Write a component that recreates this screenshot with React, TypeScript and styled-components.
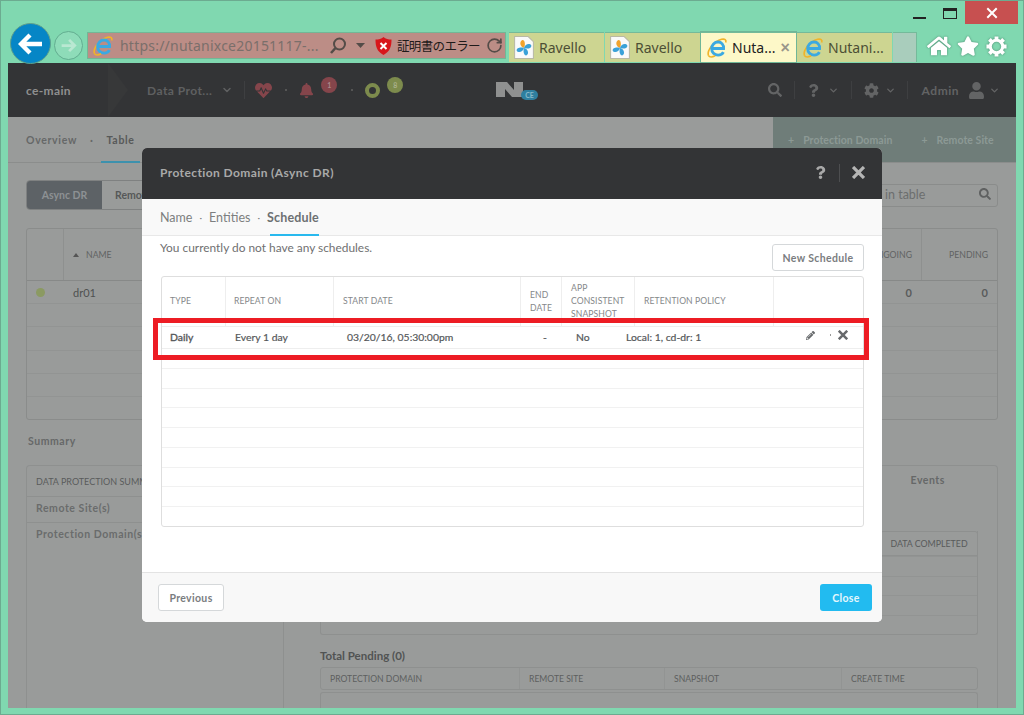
import React from "react";
import styled, { createGlobalStyle } from "styled-components";
import { ChevronDown, RotateCw } from "lucide-react";
import { FaBell, FaCog, FaHeartbeat, FaHome, FaPencilAlt, FaQuestion, FaSearch, FaStar, FaUser } from "react-icons/fa";

const Global = createGlobalStyle`
  html, body { margin: 0; padding: 0; background: #80d8b0; }
  * { box-sizing: border-box; }
  body { font-family: Lato, "Open Sans", sans-serif; }
`;

const Win = styled.div`
  position: relative; width: 1024px; height: 715px; overflow: hidden;
  background: #80d8b0; border: 1px solid #6cab90;
  display: flex; flex-direction: column;
`;
const Chrome = styled.div`height: 62px; flex: none; display: flex; flex-direction: column;`;
const Caption = styled.div`height: 31px; display: flex; justify-content: flex-end; align-items: flex-start; padding-right: 5px;`;
const Minimize = styled.div`width: 13px; height: 2px; background: #222; margin: 16px 17px 0 0;`;
const Maximize = styled.div`width: 14px; height: 11px; border: 1px solid #222; border-top-width: 3px; margin: 7px 8px 0 0;`;
const CloseWin = styled.div`
  width: 53px; height: 23px; background: #c75050; color: #fff; font: 700 15px "Liberation Sans", sans-serif;
  display: flex; align-items: center; justify-content: center;
`;
const ToolRow = styled.div`height: 31px; display: flex; align-items: flex-end; position: relative;`;
const Back = styled.div`
  width: 41px; height: 41px; border-radius: 50%; background: #0686c6; border: 1px solid #5fa08c;
  margin-left: 9px; margin-bottom: -1px; flex: none; display: flex; align-items: center; justify-content: center; z-index: 2;
`;
const Forward = styled.div`
  width: 29px; height: 29px; border-radius: 50%; border: 1px solid #62ad90; background: #8edcb9;
  margin: 0 4px 3px 3px; flex: none; display: flex; align-items: center; justify-content: center;
`;
const Address = styled.div`
  width: 419px; height: 27px; margin-bottom: 4px; flex: none; background: #bc8d86; border: 1px solid #72b796;
  display: flex; align-items: center; padding-left: 4px; font-family: "Noto Sans", sans-serif;
`;
const Url = styled.span`font-size: 14px; color: #7a6f6b; margin-left: 6px; width: 205px; white-space: nowrap; letter-spacing: .22px;`;
const AddrIcon = styled.span`display: flex; align-items: center; margin-left: ${p => p.$ml ?? 0}px; color: ${p => p.$c ?? "#544"};`;
const CertText = styled.span`font: 12.5px "Noto Sans CJK JP", sans-serif; color: #1e1a1a; margin-left: 5px; white-space: nowrap; letter-spacing: -.65px;`;
const Tabs = styled.div`display: flex; margin-left: 3px; margin-bottom: 1px; gap: 1px; align-items: stretch; height: 30px;`;
const Tab = styled.div`
  width: 95px; padding-left: 5px; display: flex; align-items: center; gap: ${p => p.$gap ?? 4}px;
  background: ${p => p.$active ? "#fdf8c8" : "#cdd591"}; color: ${p => p.$active ? "#222" : "#4c4f35"};
  border-top: 1px solid #74ba9a; font: 14px "Noto Sans", sans-serif; white-space: nowrap;
  box-shadow: ${p => p.$active ? "0 0 0 1px #6fb697" : "none"};
`;
const TabClose = styled.span`color: #99968a; font: 700 16px "Liberation Sans", sans-serif; margin-left: 1px;`;
const NewTab = styled.div`width: 24px; background: #a9cdbc; border-top: 1px solid #74ba9a; border-right: 1px solid #74ba9a;`;
const Tools = styled.div`display: flex; gap: 6px; align-items: center; margin: 0 0 3px 10px; color: #fff; height: 28px; filter: drop-shadow(0 0 1px #4c8a70);`;

const Page = styled.div`
  flex: 1; margin: 0 7px 6px; background: #999b9a; overflow: hidden; display: flex; flex-direction: column;
  color: #5a5c5c;
`;
const AppHeader = styled.div`height: 54px; flex: none; background: #333436; display: flex; align-items: center; color: #6e6f70;`;
const HeadSide = styled.div`flex: 1; display: flex; align-items: center; justify-content: ${p => p.$end ? "flex-end" : "flex-start"}; height: 100%;`;
const Cluster = styled.div`
  height: 100%; width: 120px; flex: none; position: relative; display: flex; align-items: center; padding-left: 18px;
  font-size: 12px; font-weight: 700; color: #8f8f8f; letter-spacing: .35px;
`;
const ClusterArrow = styled.svg`position: absolute; right: 0; top: 0;`;
const Crumb = styled.span`font-size: 12px; font-weight: 700; color: #5f6061; margin-left: 19px; letter-spacing: .45px; white-space: nowrap;`;
const HeadIcon = styled.span`
  position: relative; display: flex; align-items: center; margin-left: ${p => p.$ml ?? 0}px; color: ${p => p.$c ?? "#636465"};
`;
const HeadDivider = styled.span`width: 1px; height: 18px; background: #3e3f41; margin-left: ${p => p.$ml ?? 0}px;`;
const HeadDot = styled.span`width: 2px; height: 2px; background: #555; margin-left: ${p => p.$ml ?? 0}px;`;
const Badge = styled.span`
  position: absolute; left: ${p => p.$l}px; top: -6px; width: 16px; height: 16px; border-radius: 50%; background: ${p => p.$bg};
  color: ${p => p.$fg}; font-size: 7px; font-weight: 700; display: flex; align-items: center; justify-content: center;
`;
const Ring = styled.span`width: 15px; height: 15px; border-radius: 50%; border: 4px solid #7d8b4d; display: block;`;
const AdminName = styled.span`font-size: 12px; font-weight: 700; color: #626364; margin-left: 14px; letter-spacing: .5px;`;
const Logo = styled.div`width: 52px; height: 26px; flex: none;`;
const LogoBadgeText = styled.text`font: 700 7px Lato, sans-serif; fill: #86b9ca;`;

const SubBar = styled.div`height: 46px; flex: none; display: flex; justify-content: space-between; border-bottom: 1px solid #8b8d8c;`;
const SubNav = styled.div`display: flex; align-items: center; padding-left: 18px; font-size: 10.5px; font-weight: 700; letter-spacing: .68px; color: #666868;`;
const SubDot = styled.span`margin: 0 13px;`;
const SubActive = styled.span`color: #575959; height: 100%; display: flex; align-items: center; position: relative; padding: 0 5px; margin-left: -5px;
  &::after { content: ""; position: absolute; left: -1px; right: 0; bottom: -1px; height: 2px; background: #3d91ad; }`;
const AddZone = styled.div`
  width: 243px; background: #6f7d79; color: #8c9995; font-size: 10.5px; font-weight: 700; letter-spacing: .05px;
  display: flex; align-items: center; padding-left: 15px; gap: 29px; white-space: nowrap;
`;
const AddItem = styled.span`display: flex; gap: 9px; align-items: center;`;
const Content = styled.div`flex: 1; padding: 17px 18px 0; display: flex; flex-direction: column; min-height: 0;`;
const Controls = styled.div`height: 30px; flex: none; display: flex; justify-content: space-between; align-items: center;`;
const Seg = styled.div`display: flex; height: 30px; border: 1px solid #7f8181; border-radius: 4px; overflow: hidden; width: 160px;`;
const SegOn = styled.div`width: 75px; background: #5d6266; color: #8d9194; font-size: 10.5px; font-weight: 700; display: flex; align-items: center; justify-content: center;`;
const SegOff = styled.div`flex: 1; font-size: 10.5px; font-weight: 700; display: flex; align-items: center; padding-left: 13px; color: #565858;`;
const SearchBox = styled.div`
  width: 200px; height: 23px; border: 1px solid #8a8c8b; border-radius: 3px; display: flex; align-items: center;
  justify-content: space-between; padding: 0 6px 2px 86px; font-size: 12.5px; color: #6c6e6e; margin-right: 0;
`;
const DimTable = styled.div`height: 192px; margin-top: 18px; flex: none; border: 1px solid #8a8c8b; border-radius: 3px; display: flex; flex-direction: column;`;
const DimHead = styled.div`
  height: 52px; flex: none; display: grid; grid-template-columns: 36px 1fr 76px; border-bottom: 1px solid #878988;
  font-size: 8.7px; align-items: stretch; color: #616363;
`;
const DimHeadCell = styled.div`
  display: flex; align-items: center; padding: 0 9px; gap: 7px; justify-content: ${p => p.$end ? "flex-end" : "flex-start"};
  border-left: ${p => p.$line ? "1px solid #8e908f" : "none"};
`;
const HeadOngoing = styled.span`margin-left: auto;`;
const DimRow = styled.div`
  flex: 1; display: grid; grid-template-columns: 36px 1fr 76px; align-items: center; font-size: 11px; font-weight: 700;
  border-bottom: ${p => p.$last ? "none" : "1px solid #929493"};
`;
const StatusDot = styled.span`width: 9px; height: 9px; border-radius: 50%; background: #8b9a62; margin-left: 9px;`;
const RowName = styled.span`font-weight: 400; color: #4f5151; padding-left: 10px;`;
const RowSplit = styled.div`display: flex; justify-content: space-between;`;
const RowNum = styled.span`padding-right: 9px; text-align: right;`;
const SummaryTitle = styled.div`font-size: 10.5px; font-weight: 700; letter-spacing: .55px; margin: 14px 0 17px 2px; line-height: 14px; color: #666868;`;
const SummaryPanel = styled.div`flex: 1; min-height: 0; border: 1px solid #8e908f; border-bottom: none; border-radius: 4px 4px 0 0; display: flex;`;
const SummaryLeft = styled.div`width: 257px; flex: none; border-right: 1px solid #8e908f;`;
const SummaryHead = styled.div`height: 31px; padding: 10px 9px 0; font-size: 9px; border-bottom: 1px solid #8e908f; white-space: nowrap; color: #5a5c5c;`;
const SummaryLine = styled.div`height: ${p => p.$h}px; padding: 5px 9px 0; font-size: 10.5px; font-weight: 700; letter-spacing: .55px; border-bottom: ${p => p.$line ? "1px solid #8e908f" : "none"}; white-space: nowrap; color: #6a6c6c;`;
const SummaryRight = styled.div`flex: 1; min-width: 0; padding: 0 19px 0 36px; display: flex; flex-direction: column;`;
const EventsTab = styled.div`height: 31px; padding-top: 8px; text-align: right; font-size: 10.5px; font-weight: 700; padding-right: 33px; letter-spacing: .55px; color: #666868;`;
const DimBox = styled.div`height: 104px; margin-top: 34px; flex: none; border: 1px solid #8e908f; border-top: none; border-radius: 0 0 3px 3px; display: flex; flex-direction: column;`;
const CompletedCell = styled.div`height: 25px; flex: none; margin-left: auto; width: 98px; border: 1px solid #8e908f; border-radius: 3px 3px 0 0; font-size: 8.8px; display: flex; align-items: center; justify-content: center; margin-right: -1px; white-space: nowrap; color: #585a5a;`;
const BoxRow = styled.div`flex: 1; border-top: 1px solid #929493;`;
const PendingTitle = styled.div`font-size: 11.5px; font-weight: 700; margin-top: 14px; line-height: 14px; color: #515353;`;
const PendingHead = styled.div`
  height: 23px; margin-top: 4px; flex: none; border: 1px solid #8e908f; border-radius: 3px; display: grid;
  grid-template-columns: 198px 145px 177px 1fr; font-size: 8.6px; color: #5d5f5f;
`;
const PendingCell = styled.div`display: flex; align-items: center; padding-left: 9px; border-left: ${p => p.$line ? "1px solid #929493" : "none"};`;
const PendingBody = styled.div`flex: 1; margin-top: 2px; border: 1px solid #8e908f; border-bottom: none; border-radius: 3px 3px 0 0;`;

const Modal = styled.div`
  position: absolute; left: 141px; top: 147px; width: 740px; height: 474px; border-radius: 5px; overflow: hidden;
  display: flex; flex-direction: column; background: #fff; color: #666;
`;
const ModalHead = styled.div`height: 51px; flex: none; background: #333436; display: flex; align-items: center; padding: 0 17px 2px 18px; color: #a9a9a9;`;
const ModalTitle = styled.div`font-size: 12px; font-weight: 700; flex: 1; letter-spacing: .4px;`;
const HeadSep = styled.span`width: 1px; height: 18px; background: #4d4e50; margin: 0 12px;`;
const ModalTabs = styled.div`height: 37px; flex: none; background: #f9f9f9; border-bottom: 1px solid #e8e8e8; display: flex; align-items: center; padding-left: 18px; font-size: 12.5px; color: #7d7f80;`;
const TabDot = styled.span`margin: 0 7px; font-size: 10px;`;
const TabOn = styled.span`font-weight: 700; color: #6d7072; height: 100%; display: flex; align-items: center; position: relative; letter-spacing: .15px;
  &::after { content: ""; position: absolute; left: 3px; right: 0; bottom: -1px; height: 2px; background: #29b9ee; }`;
const ModalBody = styled.div`flex: 1; padding: 0 18px 0 19px; min-height: 0;`;
const IntroRow = styled.div`height: 40px; display: flex; justify-content: space-between;`;
const IntroText = styled.div`font-size: 11.9px; color: #6f7071; margin: 5px 0 0 -1px; line-height: 14px;`;
const GhostBtn = styled.div`
  height: 27px; width: ${p => p.$w}px; margin-top: ${p => p.$mt ?? 0}px; border: 1px solid #d5d8da; border-radius: 3px; background: #fff;
  color: #7a7d7f; font-size: 10.5px; font-weight: 700; letter-spacing: .35px; display: flex; align-items: center; justify-content: center;
`;
const SchedTable = styled.div`height: 251px; border: 1px solid #dedede; border-radius: 3px; display: flex; flex-direction: column;`;
const SchedHead = styled.div`height: 49px; flex: none; display: grid; grid-template-columns: 63px 108px 187px 41px 73px 139px 1fr; color: #85888a; font-size: 8.6px; letter-spacing: .1px;`;
const SchedHeadCell = styled.div`display: flex; align-items: center; padding-left: ${p => p.$pad ?? 9}px; line-height: 12.7px; border-left: ${p => p.$line ? "1px solid #eee" : "none"};`;
const SchedDataRow = styled.div`
  height: 23px; flex: none; display: grid; grid-template-columns: 65px 112px 196px 33px 50px 179px 1fr; align-items: center;
  border-top: 1px solid #eee; border-bottom: 1px solid #eee; font-size: 10.4px; color: #55585a; padding: 0 0 2px 8px;
`;
const SchedCell = styled.span`white-space: nowrap; font-weight: 400; -webkit-text-stroke: ${p => p.$strong ? ".35px" : ".2px"};`;
const RowActions = styled.span`display: flex; align-items: center; color: #66696b; padding-bottom: 3px; padding-left: 1px;`;
const ActionDot = styled.span`width: 1px; height: 2px; background: #999; margin: 0 7px 0 15px;`;
const EmptyRow = styled.div`flex: 1; border-bottom: ${p => p.$last ? "none" : "1px solid #f1f1f1"};`;
const ModalFoot = styled.div`height: 50px; flex: none; background: #f8f8f8; border-top: 1px solid #e3e3e3; display: flex; align-items: center; justify-content: space-between; padding: 0 10px 0 16px;`;
const PrimaryBtn = styled.div`width: 52px; height: 27px; border-radius: 3px; background: #22bbf0; color: #e4f7fd; font-size: 10.5px; font-weight: 700; letter-spacing: .3px; display: flex; align-items: center; justify-content: center;`;
const Callout = styled.div`position: absolute; left: 11px; top: 170px; width: 716px; height: 42px; border: 5px solid #ed1c24; pointer-events: none;`;
const TabLabel = styled.span`margin-left: 1px;`;
const HeadEnd = styled.span`width: 16px; flex: none;`;

const Cross = ({ s, c, w = 3 }: { s: number; c: string; w?: number }) => (
  <svg width={s} height={s} viewBox="0 0 12 12"><path d="M2 2l8 8M10 2l-8 8" stroke={c} strokeWidth={w} strokeLinecap="square" fill="none" /></svg>
);
const IeIcon = ({ s = 22 }: { s?: number }) => (
  <svg width={s} height={s} viewBox="0 0 24 24" fill="none">
    <path d="M2.500 20C1 14 9 4.500 17 2.500c3.500-.8 5.500 .5 4.500 3.500" stroke="#f0b429" strokeWidth="1.800" />
    <path d="M7 12.500h12.200c.3-4-2.400-7-6-7-4 0-7 3.200-7 7.200s3 7.100 7 7.100c2.600 0 4.700-1.200 5.800-3.300" stroke="#3ba9e2" strokeWidth="3.100" />
    <path d="M2.500 20c1.500 2.500 5 1.800 7.500 .5" stroke="#f0b429" strokeWidth="1.800" />
  </svg>
);
const RavelloIcon = () => (
  <svg width="20" height="23" viewBox="0 0 19 22">
    <path d="M.5.5h13l5 5v16H.5z" fill="#fafafa" stroke="#b9b9a5" />
    <path d="M9.500 11.500C5.500 10 5 5.500 7.500 4c3-.8 3.500 4.500 2 7.500z" fill="#f2a32c" />
    <path d="M9.500 11.500c1-4 5.500-5 7-2.500 .5 2.800-4 3.500-7 2.500z" fill="#3aa1d8" />
    <path d="M9.500 11.500c4 1 5 5.500 2.500 7-2.800 .5-3.500-4-2.500-7z" fill="#3aa1d8" />
    <path d="M9.500 11.500c-1 4-5.500 5-7 2.500-.5-2.800 4-3.500 7-2.500z" fill="#3aa1d8" />
  </svg>
);
const GearOutline = () => (
  <svg width="23" height="23" viewBox="0 0 24 24" fill="none" stroke="#fff">
    <circle cx="12" cy="12" r="6.500" strokeWidth="3.200" />
    <path d="M12 1.500v4M12 18.500v4M1.500 12h4M18.500 12h4M4.600 4.600l2.800 2.800M16.600 16.600l2.800 2.800M4.600 19.400l2.800-2.800M16.600 7.400l2.800-2.800" strokeWidth="4" />
  </svg>
);

const emptyRows = [0, 1, 2, 3, 4, 5, 6, 7, 8];

export default function App() {
  return (
    <Win>
      <Global />
      <Chrome>
        <Caption>
          <Minimize />
          <Maximize />
          <CloseWin><Cross s={12} c="#fff" w={2} /></CloseWin>
        </Caption>
        <ToolRow>
          <Back>
            <svg width="26" height="24" viewBox="0 0 26 24"><path d="M12 3L3 12l9 9M4 12h20" stroke="#fff" strokeWidth="4.400" fill="none" /></svg>
          </Back>
          <Forward>
            <svg width="17" height="15" viewBox="0 0 26 24"><path d="M14 3l9 9-9 9M22 12H2" stroke="#b9e8d2" strokeWidth="4.400" fill="none" /></svg>
          </Forward>
          <Address>
            <IeIcon />
            <Url>https://nutanixce20151117-...</Url>
            <AddrIcon $ml={3}>
              <svg width="20" height="20" viewBox="0 0 20 20"><circle cx="11.500" cy="8" r="5.500" stroke="#544c48" strokeWidth="2" fill="none" /><path d="M7.500 12L3 17" stroke="#544c48" strokeWidth="2.600" /></svg>
            </AddrIcon>
            <AddrIcon $ml={8}>
              <svg width="9" height="5" viewBox="0 0 9 5"><path d="M0 0h9L4.500 5z" fill="#544c48" /></svg>
            </AddrIcon>
            <AddrIcon $ml={10}>
              <svg width="17" height="18" viewBox="0 0 17 18"><path d="M8.500 0c2 2 5 2.500 8 2.500 0 7-1.500 12-8 15.500C2 14.500.5 9.500.5 2.500c3 0 6-.5 8-2.500z" fill="#d8161b" /><path d="M5.500 6l6 6M11.500 6l-6 6" stroke="#fff" strokeWidth="2" /></svg>
            </AddrIcon>
            <CertText>証明書のエラー</CertText>
            <AddrIcon $ml={6}><RotateCw size={17} strokeWidth={2.4} color="#544c48" /></AddrIcon>
          </Address>
          <Tabs>
            <Tab><RavelloIcon /><TabLabel>Ravello</TabLabel></Tab>
            <Tab><RavelloIcon /><TabLabel>Ravello</TabLabel></Tab>
            <Tab $active>
              <IeIcon />Nuta...<TabClose>×</TabClose>
            </Tab>
            <Tab><IeIcon />Nutani...</Tab>
            <NewTab />
          </Tabs>
          <Tools>
            <FaHome size={24} />
            <FaStar size={22} />
            <GearOutline />
          </Tools>
        </ToolRow>
      </Chrome>
      <Page>
        <AppHeader>
          <HeadSide>
            <Cluster>
              ce-main
              <ClusterArrow width="20" height="54" viewBox="0 0 20 54"><path d="M0 0l20 27L0 54z" fill="#373839" /></ClusterArrow>
            </Cluster>
            <Crumb>Data Prot...</Crumb>
            <HeadIcon $ml={9} $c="#5f6061"><ChevronDown size={12} strokeWidth={3} /></HeadIcon>
            <HeadDivider $ml={11} />
            <HeadIcon $ml={10} $c="#85454b"><FaHeartbeat size={17} /></HeadIcon>
            <HeadDot $ml={13} />
            <HeadIcon $ml={12} $c="#85454b">
              <FaBell size={15} />
              <Badge $l={22} $bg="#85454b" $fg="#a98a8c">1</Badge>
            </HeadIcon>
            <HeadDot $ml={37} />
            <HeadIcon $ml={12}>
              <Ring />
              <Badge $l={22} $bg="#7d8b4d" $fg="#a9b08c">8</Badge>
            </HeadIcon>
          </HeadSide>
          <Logo>
            <svg width="52" height="26" viewBox="0 0 52 26">
              <path d="M10 5h11l7 8V5h9v15H26l-7-8v8h-9z" fill="#8f9090" />
              <rect x="35" y="13" width="17" height="10" rx="5" fill="#2f7f9f" />
              <LogoBadgeText x="43.500" y="20.500" textAnchor="middle">CE</LogoBadgeText>
            </svg>
          </Logo>
          <HeadSide $end>
            <HeadIcon><FaSearch size={14} /></HeadIcon>
            <HeadDivider $ml={12} />
            <HeadIcon $ml={12}><FaQuestion size={13} /></HeadIcon>
            <HeadIcon $ml={8}><ChevronDown size={11} strokeWidth={3} /></HeadIcon>
            <HeadDivider $ml={12} />
            <HeadIcon $ml={12}><FaCog size={15} /></HeadIcon>
            <HeadIcon $ml={6}><ChevronDown size={11} strokeWidth={3} /></HeadIcon>
            <HeadDivider $ml={11} />
            <AdminName>Admin</AdminName>
            <HeadIcon $ml={9}><FaUser size={17} /></HeadIcon>
            <HeadIcon $ml={4}><ChevronDown size={11} strokeWidth={3} /></HeadIcon>
            <HeadEnd />
          </HeadSide>
        </AppHeader>
        <SubBar>
          <SubNav>
            Overview<SubDot>·</SubDot><SubActive>Table</SubActive>
          </SubNav>
          <AddZone>
            <AddItem><span>+</span><span>Protection Domain</span></AddItem>
            <AddItem><span>+</span><span>Remote Site</span></AddItem>
          </AddZone>
        </SubBar>
        <Content>
          <Controls>
            <Seg><SegOn>Async DR</SegOn><SegOff>Remote Site</SegOff></Seg>
            <SearchBox>in table<FaSearch size={12} color="#5f6161" /></SearchBox>
          </Controls>
          <DimTable>
            <DimHead>
              <DimHeadCell />
              <DimHeadCell $line>
                <svg width="6" height="4" viewBox="0 0 6 4"><path d="M3 0l3 4H0z" fill="#555" /></svg>NAME
                <HeadOngoing>ONGOING</HeadOngoing>
              </DimHeadCell>
              <DimHeadCell $line $end>PENDING</DimHeadCell>
            </DimHead>
            <DimRow>
              <StatusDot />
              <RowSplit><RowName>dr01</RowName><RowNum>0</RowNum></RowSplit>
              <RowNum>0</RowNum>
            </DimRow>
            {[0, 1, 2, 3, 4].map(i => <DimRow key={i} $last={i === 4} />)}
          </DimTable>
          <SummaryTitle>Summary</SummaryTitle>
          <SummaryPanel>
            <SummaryLeft>
              <SummaryHead>DATA PROTECTION SUMMARY</SummaryHead>
              <SummaryLine $h={26} $line>Remote Site(s)</SummaryLine>
              <SummaryLine $h={120}>Protection Domain(s)</SummaryLine>
            </SummaryLeft>
            <SummaryRight>
              <EventsTab>Events</EventsTab>
              <DimBox>
                <CompletedCell>DATA COMPLETED</CompletedCell>
                <BoxRow /><BoxRow /><BoxRow /><BoxRow />
              </DimBox>
              <PendingTitle>Total Pending (0)</PendingTitle>
              <PendingHead>
                <PendingCell>PROTECTION DOMAIN</PendingCell>
                <PendingCell $line>REMOTE SITE</PendingCell>
                <PendingCell $line>SNAPSHOT</PendingCell>
                <PendingCell $line>CREATE TIME</PendingCell>
              </PendingHead>
              <PendingBody />
            </SummaryRight>
          </SummaryPanel>
        </Content>
      </Page>
      <Modal>
        <ModalHead>
          <ModalTitle>Protection Domain (Async DR)</ModalTitle>
          <FaQuestion size={13} />
          <HeadSep />
          <Cross s={13} c="#b5b5b5" />
        </ModalHead>
        <ModalTabs>
          Name<TabDot>·</TabDot>Entities<TabDot>·</TabDot><TabOn>Schedule</TabOn>
        </ModalTabs>
        <ModalBody>
          <IntroRow>
            <IntroText>You currently do not have any schedules.</IntroText>
            <GhostBtn $w={92} $mt={8}>New Schedule</GhostBtn>
          </IntroRow>
          <SchedTable>
            <SchedHead>
              <SchedHeadCell $pad={8}>TYPE</SchedHeadCell>
              <SchedHeadCell $line $pad={8}>REPEAT ON</SchedHeadCell>
              <SchedHeadCell $line>START DATE</SchedHeadCell>
              <SchedHeadCell $line>END<br />DATE</SchedHeadCell>
              <SchedHeadCell $line>APP<br />CONSISTENT<br />SNAPSHOT</SchedHeadCell>
              <SchedHeadCell $line>RETENTION POLICY</SchedHeadCell>
              <SchedHeadCell $line />
            </SchedHead>
            <SchedDataRow>
              <SchedCell $strong>Daily</SchedCell>
              <SchedCell>Every 1 day</SchedCell>
              <SchedCell>03/20/16, 05:30:00pm</SchedCell>
              <SchedCell>-</SchedCell>
              <SchedCell>No</SchedCell>
              <SchedCell>Local: 1, cd-dr: 1</SchedCell>
              <RowActions>
                <FaPencilAlt size={9} />
                <ActionDot />
                <Cross s={10} c="#66696b" />
              </RowActions>
            </SchedDataRow>
            {emptyRows.map(i => <EmptyRow key={i} $last={i === emptyRows.length - 1} />)}
          </SchedTable>
        </ModalBody>
        <ModalFoot>
          <GhostBtn $w={66}>Previous</GhostBtn>
          <PrimaryBtn>Close</PrimaryBtn>
        </ModalFoot>
        <Callout />
      </Modal>
    </Win>
  );
}
